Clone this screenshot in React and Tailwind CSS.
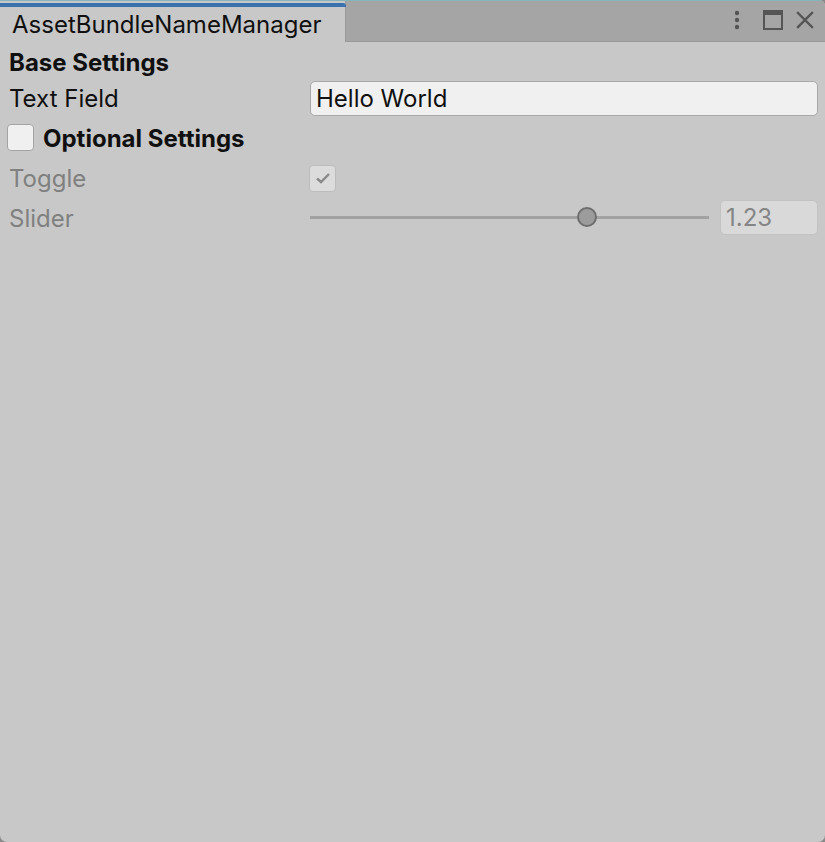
export default function App() {
  const font = { fontFamily: "Inter, 'Noto Sans', sans-serif" };
  return (
    <div className="w-[825px] h-[842px] bg-[#8a8a8a] overflow-hidden" style={font}>
      <div className="flex flex-col h-full rounded-b-[7px] rounded-tr-[6px] overflow-hidden bg-[#c8c8c8]">
        {/* tab bar */}
        <div className="relative h-[42px] flex-none bg-[#a5a5a5] border-t border-[#86b4bb] border-b border-b-[#999999] flex">
          <div className="w-[346px] h-[41px] -mb-px bg-[#c8c8c8] border-r border-[#999999] flex flex-col">
            <div className="h-[4px] mt-[2px] bg-[#3a72b0] rounded-tr-[3px] mr-[-1px]" />
            <div className="flex-1 flex items-center pl-[12px] pt-[1px] text-[24px] text-[#101010] leading-none">
              AssetBundleNameManager
            </div>
          </div>
          <div className="flex-1" />
          <div className="flex items-center pr-[11px] pb-[2px]">
            <svg width="8" height="20" viewBox="0 0 8 20" className="mr-[22px]">
              <circle cx="4" cy="3" r="2.2" fill="#555" />
              <circle cx="4" cy="10" r="2.2" fill="#555" />
              <circle cx="4" cy="17" r="2.2" fill="#555" />
            </svg>
            <svg width="20" height="20" viewBox="0 0 20 20" className="mr-[13px]">
              <rect x="1" y="1" width="18" height="18" fill="none" stroke="#555" strokeWidth="2" />
              <rect x="1" y="1" width="18" height="4" fill="#555" />
            </svg>
            <svg width="18" height="18" viewBox="0 0 18 18">
              <path d="M2 2 L16 16 M16 2 L2 16" stroke="#555" strokeWidth="2.4" strokeLinecap="square" />
            </svg>
          </div>
        </div>

        {/* content */}
        <div className="flex flex-col px-[8px] pr-[7px] pt-[6px] text-[24px] leading-none">
          <div className="h-[30px] flex items-center font-bold text-[#101010] pl-px">Base Settings</div>

          <div className="h-[40px] flex items-center">
            <div className="w-[302px] text-[#101010] pl-px pt-[2px]">Text Field</div>
            <div className="flex-1 h-[35px] bg-[#f0f0f0] border border-[#a8a8a8] rounded-[5px] flex items-center pl-[5px] pt-[1px] text-[#101010]">
              Hello World
            </div>
          </div>

          <div className="h-[38px] flex items-center">
            <div className="w-[27px] h-[27px] -ml-[1px] bg-[#f0f0f0] border border-[#a4a4a4] rounded-[4px]" />
            <div className="ml-[9px] font-bold text-[#101010] pt-[4px]">Optional Settings</div>
          </div>

          <div className="h-[42px] flex items-center pt-[2px]">
            <div className="w-[302px] text-[#808080] pl-px pt-[2px]">Toggle</div>
            <div className="w-[27px] h-[27px] -ml-[1px] bg-[#dcdcdc] border border-[#bcbcbc] rounded-[4px] flex items-center justify-center">
              <svg width="18" height="18" viewBox="0 0 18 18">
                <path d="M3 9.5 L7 13 L15 5" fill="none" stroke="#8a8a8a" strokeWidth="2.4" />
              </svg>
            </div>
          </div>

          <div className="h-[38px] flex items-center">
            <div className="w-[302px] text-[#808080] pl-px pt-[4px]">Slider</div>
            <div className="relative w-[399px] h-[20px] flex items-center">
              <div className="w-full h-[3px] bg-[#a2a2a2]" />
              <div className="absolute left-[267px] top-[0px] w-[20px] h-[20px] rounded-full bg-[#9c9c9c] border-2 border-[#6e6e6e]" />
            </div>
            <div className="ml-[11px] flex-1 h-[35px] bg-[#d9d9d9] border border-[#c2c2c2] rounded-[5px] flex items-center pl-[5px] pt-[2px] text-[#858585]">
              1.23
            </div>
          </div>
        </div>
      </div>
    </div>
  );
}
